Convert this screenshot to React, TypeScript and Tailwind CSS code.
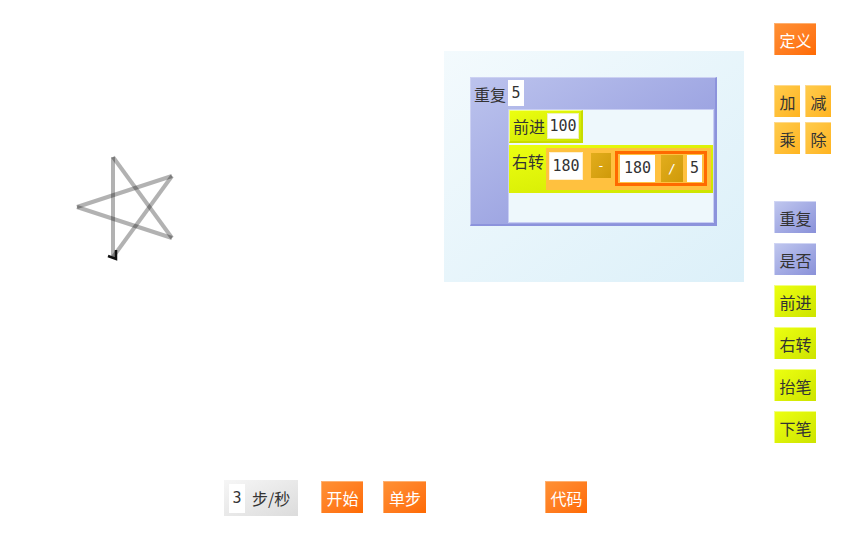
import React from "react";

const CJK = "font-['Noto_Sans_CJK_SC',sans-serif]";
const MONO = "font-['DejaVu_Sans_Mono',monospace]";

const orange =
  "bg-gradient-to-br from-[#ff9033] to-[#ff6a00] text-white border-t border-l border-[#ffb070]";
const yellow =
  "bg-gradient-to-br from-[#ffcb4a] to-[#ffb41e] text-[#333] border-t border-l border-[#ffd98a]";
const purple =
  "bg-gradient-to-br from-[#bfc6ee] to-[#8a91d9] text-[#333] border-t border-l border-[#d0d5f4]";
const lime =
  "bg-gradient-to-br from-[#ecff10] to-[#cde400] text-[#333] border-t border-l border-[#f2ff80]";

function Btn({ cls, label, w = "w-[42px]" }: { cls: string; label: string; w?: string }) {
  return (
    <div
      className={`${cls} ${w} h-[32px] flex items-center justify-center text-[16px] leading-none ${CJK}`}
    >
      {label}
    </div>
  );
}

function Input({ v, cls = "" }: { v: string; cls?: string }) {
  return (
    <div
      className={`bg-white flex items-center justify-center text-[15px] text-[#333] leading-none ${MONO} ${cls}`}
    >
      {v}
    </div>
  );
}

const pts: [number, number][] = [
  [113, 257],
  [113, 157],
  [172, 238],
  [77, 207],
  [172, 176],
  [113, 257],
];

export default function App() {
  return (
    <div className="w-[844px] h-[535px] flex bg-white overflow-hidden">
      <div className="w-[760px] flex flex-col">
        <div className="flex h-[480px]">
          <svg width="444" height="480" className="shrink-0">
            {pts.slice(0, -1).map((p, i) => (
              <line
                key={i}
                x1={p[0]}
                y1={p[1]}
                x2={pts[i + 1][0]}
                y2={pts[i + 1][1]}
                stroke="rgba(0,0,0,0.3)"
                strokeWidth="4"
                strokeLinecap="butt"
              />
            ))}
            <path d="M116,250 L116,259 L108,256" fill="none" stroke="#111" strokeWidth="2.5" />
          </svg>
          <div className="mt-[51px] w-[300px] h-[231px] bg-gradient-to-br from-[#f3fafd] to-[#dcf0f9] pl-[26px] pt-[26px]">
            <div className="w-[247px] h-[149px] flex flex-col bg-gradient-to-br from-[#bcc3ed] to-[#8a91da] border-t border-l border-[#ccd1f2] border-r-2 border-b-2 border-r-[#8c93dc] border-b-[#8c93dc]">
              <div className="h-[31px] flex items-start pt-[2px]">
                <span className={`ml-[3px] mt-[6px] text-[16px] leading-none text-[#333] ${CJK}`}>重复</span>
                <Input v="5" cls="ml-[2px] w-[16px] h-[26px]" />
              </div>
              <div className="flex-1 ml-[37px] mr-[1px] mb-[1px] bg-[#eef8fc] border border-[#c8cef4] flex flex-col">
                <div className={`w-[74px] h-[33px] flex items-center ${lime} border-r-2 border-b-2 border-r-[#c8dc00] border-b-[#c8dc00]`}>
                  <span className={`ml-[3px] text-[16px] leading-none ${CJK}`}>前进</span>
                  <Input v="100" cls="ml-[2px] w-[32px] h-[26px] border border-[#eef0c0]" />
                </div>
                <div className={`mt-[2px] h-[48px] flex items-start ${lime} border-none`}>
                  <span className={`ml-[3px] mt-[8px] text-[16px] leading-none ${CJK}`}>右转</span>
                  <div className="ml-[2px] mt-[3px] w-[165px] h-[42px] bg-[#ffc13f] flex items-start">
                    <Input v="180" cls="ml-[3px] mt-[4px] w-[34px] h-[28px] border border-[#fff0d0]" />
                    <div className={`ml-[8px] mt-[5px] w-[20px] h-[25px] bg-gradient-to-br from-[#e2ad1c] to-[#cf9a08] text-white flex items-center justify-center text-[13px] ${MONO}`}>
                      -
                    </div>
                    <div className="ml-[4px] mt-[3px] w-[92px] h-[35px] border-[3px] border-[#ff6a00] bg-[#ffc13f] flex items-center">
                      <Input v="180" cls="ml-[2px] w-[35px] h-[27px]" />
                      <div className={`ml-[6px] w-[22px] h-[27px] bg-gradient-to-br from-[#e2ad1c] to-[#cf9a08] text-white flex items-center justify-center text-[13px] ${MONO}`}>
                        /
                      </div>
                      <Input v="5" cls="ml-[4px] w-[15px] h-[27px]" />
                    </div>
                  </div>
                </div>
              </div>
            </div>
          </div>
        </div>
        <div className="flex items-start pl-[224px]">
          <div className="w-[74px] h-[36px] bg-gradient-to-br from-[#f6f6f6] to-[#dcdcdc] flex items-center">
            <Input v="3" cls="ml-[5px] w-[16px] h-[29px]" />
            <span className={`ml-[7px] text-[16px] leading-none text-[#333] ${CJK}`}>步/秒</span>
          </div>
          <div className="ml-[23px] mt-[1px]">
            <Btn cls={orange} label="开始" />
          </div>
          <div className="ml-[20px] mt-[1px]">
            <Btn cls={orange} label="单步" w="w-[43px]" />
          </div>
          <div className="ml-[119px] mt-[1px]">
            <Btn cls={orange} label="代码" />
          </div>
        </div>
      </div>
      <div className="flex flex-col pl-[14px] pt-[23px]">
        <Btn cls={orange} label="定义" />
        <div className="flex gap-[5px] mt-[30px]">
          <Btn cls={yellow} label="加" w="w-[26px]" />
          <Btn cls={yellow} label="减" w="w-[26px]" />
        </div>
        <div className="flex gap-[5px] mt-[5px]">
          <Btn cls={yellow} label="乘" w="w-[26px]" />
          <Btn cls={yellow} label="除" w="w-[26px]" />
        </div>
        <div className="mt-[47px] flex flex-col gap-[10px]">
          <Btn cls={purple} label="重复" />
          <Btn cls={purple} label="是否" />
          <Btn cls={lime} label="前进" />
          <Btn cls={lime} label="右转" />
          <Btn cls={lime} label="抬笔" />
          <Btn cls={lime} label="下笔" />
        </div>
      </div>
    </div>
  );
}
